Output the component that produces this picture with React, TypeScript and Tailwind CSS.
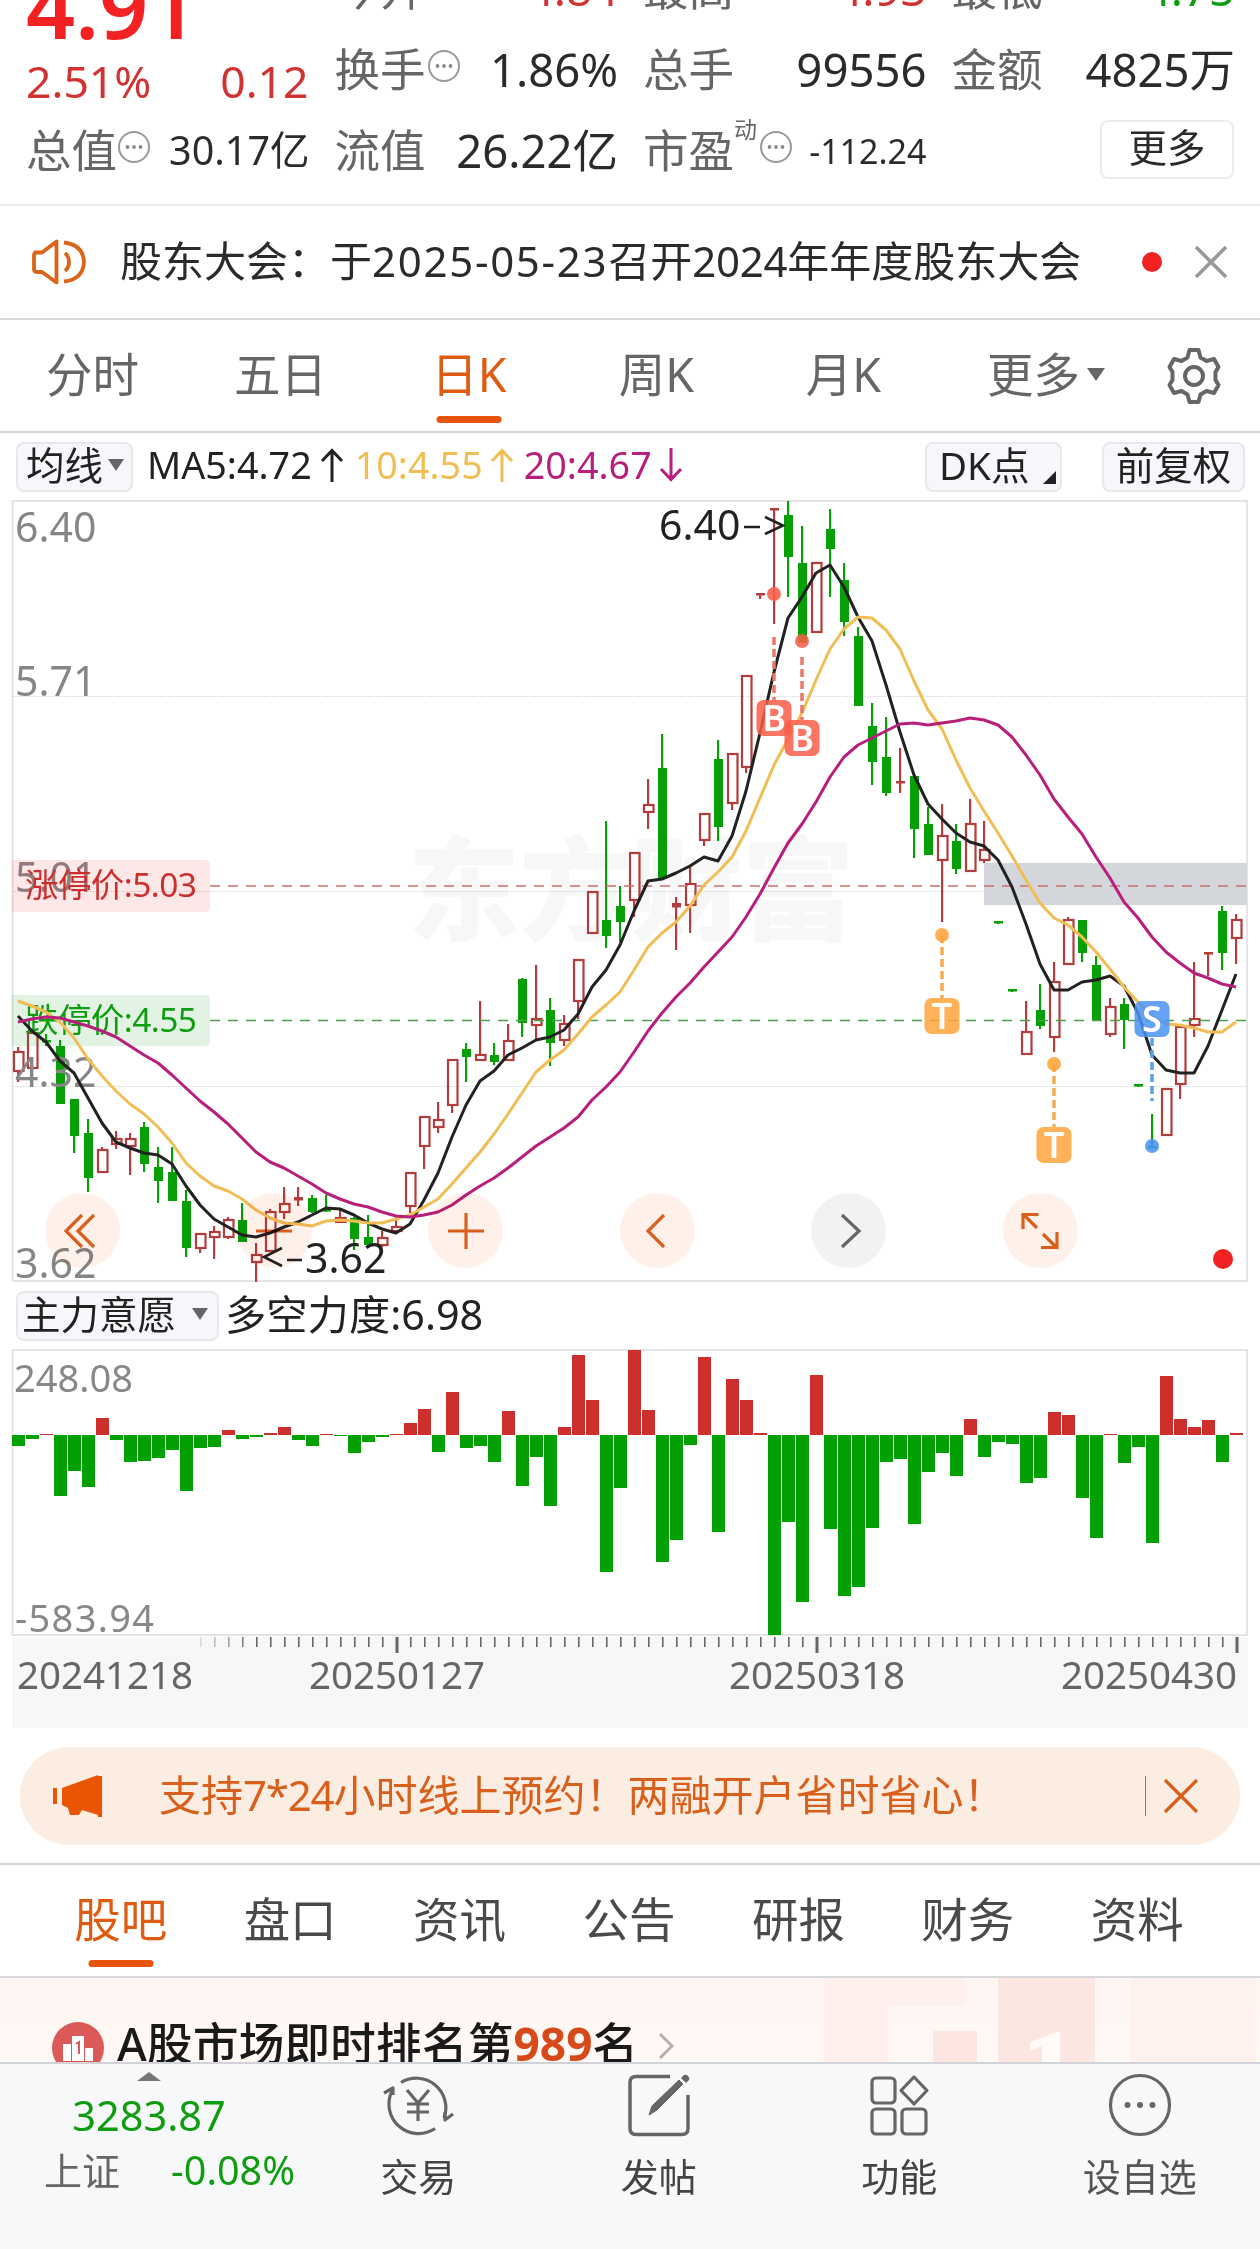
import type { ReactNode } from "react";

type Candle = [up: number, high: number, top: number, bottom: number, low: number];

const STEP = 14;
const X0 = 18;
const xAt = (i: number) => X0 + i * STEP;

// 1 = up (hollow red), 0 = down (solid green); y values are chart pixels
const CANDLES: Candle[] = [
  [1, 1047, 1051, 1072, 1082], [1, 1032, 1032, 1069, 1069], [0, 1034, 1041, 1043, 1046],
  [0, 1040, 1046, 1104, 1104], [0, 1099, 1099, 1136, 1153], [0, 1119, 1133, 1178, 1192],
  [1, 1147, 1149, 1173, 1173], [1, 1131, 1138, 1145, 1149], [1, 1133, 1138, 1147, 1175],
  [0, 1122, 1127, 1164, 1172], [0, 1147, 1167, 1181, 1203], [0, 1147, 1172, 1201, 1201],
  [0, 1190, 1201, 1248, 1257], [1, 1233, 1233, 1249, 1253], [1, 1226, 1231, 1238, 1259],
  [1, 1217, 1219, 1238, 1239], [0, 1203, 1220, 1242, 1242], [1, 1243, 1254, 1263, 1282],
  [1, 1209, 1211, 1252, 1252], [1, 1187, 1203, 1213, 1219], [1, 1187, 1198, 1201, 1206],
  [0, 1195, 1198, 1212, 1213], [0, 1195, 1209, 1212, 1212], [1, 1210, 1217, 1223, 1223],
  [0, 1217, 1218, 1239, 1250], [0, 1215, 1237, 1245, 1245], [1, 1231, 1237, 1246, 1247],
  [1, 1217, 1226, 1232, 1232], [1, 1172, 1172, 1207, 1213], [1, 1116, 1116, 1147, 1169],
  [1, 1102, 1119, 1128, 1133], [1, 1059, 1059, 1106, 1113], [0, 1043, 1049, 1057, 1082],
  [1, 1001, 1054, 1061, 1061], [0, 1043, 1055, 1062, 1065], [1, 1024, 1040, 1061, 1061],
  [0, 978, 979, 1023, 1037], [1, 965, 1018, 1026, 1040], [0, 998, 1010, 1043, 1066],
  [1, 1015, 1023, 1041, 1046], [1, 959, 959, 1002, 1019], [1, 891, 891, 934, 934],
  [0, 821, 920, 936, 948], [0, 886, 906, 922, 942], [1, 852, 852, 901, 917],
  [1, 779, 804, 813, 829], [0, 734, 768, 879, 879], [1, 897, 904, 908, 950],
  [1, 865, 883, 906, 933], [1, 813, 813, 841, 846], [0, 740, 759, 827, 841],
  [1, 753, 753, 804, 810], [1, 675, 675, 768, 773], [1, 594, 594, 594, 599],
  [1, 509, 509, 509, 624], [0, 501, 515, 557, 597], [0, 526, 563, 643, 643],
  [1, 562, 562, 633, 633], [0, 509, 529, 549, 597], [0, 563, 580, 622, 636],
  [0, 627, 636, 706, 706], [0, 703, 726, 762, 785], [0, 717, 757, 793, 796],
  [1, 748, 782, 782, 793], [0, 776, 776, 829, 858], [0, 807, 824, 855, 855],
  [1, 804, 835, 861, 922], [0, 824, 841, 869, 874], [1, 799, 823, 872, 872],
  [1, 821, 849, 861, 863], [0, 922, 922, 922, 922], [0, 990, 990, 990, 990],
  [1, 1001, 1031, 1055, 1055], [0, 984, 1010, 1026, 1029], [1, 962, 981, 1038, 1052],
  [1, 917, 919, 965, 965], [0, 920, 920, 953, 962], [0, 956, 965, 1021, 1021],
  [1, 998, 1006, 1035, 1037], [0, 998, 1004, 1020, 1049], [0, 1085, 1085, 1085, 1085],
  [0, 1114, 1147, 1147, 1147], [1, 1088, 1088, 1136, 1136], [1, 1026, 1026, 1085, 1099],
  [1, 962, 1018, 1026, 1037], [1, 953, 953, 953, 976], [0, 906, 911, 953, 970],
  [1, 914, 919, 939, 964],
];

const MA5 = [
  1016, 1031, 1042, 1061, 1073, 1098, 1123, 1142, 1148, 1153, 1155, 1164, 1186, 1205, 1219, 1227,
  1235, 1237, 1233, 1227, 1222, 1215, 1208, 1209, 1215, 1223, 1229, 1233, 1224, 1200, 1173, 1137,
  1105, 1081, 1071, 1055, 1048, 1040, 1037, 1030, 1014, 987, 970, 945, 911, 881, 879, 873, 866, 857,
  861, 836, 791, 733, 672, 618, 597, 573, 565, 587, 617, 641, 685, 732, 775, 804, 819, 833, 842, 846,
  860, 887, 924, 964, 990, 990, 982, 980, 976, 986, 1013, 1055, 1070, 1073, 1073, 1046, 1010, 974,
];

const MA10 = [
  1001, 1006, 1012, 1022, 1038, 1059, 1076, 1091, 1104, 1114, 1127, 1143, 1163, 1176, 1186, 1191,
  1199, 1210, 1218, 1223, 1224, 1226, 1221, 1220, 1221, 1223, 1223, 1219, 1215, 1207, 1199, 1184,
  1168, 1152, 1134, 1114, 1093, 1072, 1060, 1050, 1034, 1017, 1005, 992, 970, 947, 933, 922, 906, 885,
  872, 857, 831, 798, 765, 739, 713, 680, 649, 629, 617, 618, 630, 649, 681, 710, 729, 760, 788, 811,
  833, 856, 880, 903, 918, 925, 937, 952, 969, 987, 1002, 1016, 1024, 1025, 1028, 1032, 1032, 1022,
];

const MA20 = [
  1022, 1019, 1017, 1018, 1022, 1026, 1031, 1037, 1046, 1055, 1063, 1075, 1088, 1101, 1112, 1124,
  1138, 1152, 1162, 1168, 1176, 1184, 1193, 1199, 1204, 1207, 1212, 1216, 1217, 1215, 1212, 1205,
  1195, 1186, 1178, 1168, 1157, 1146, 1137, 1128, 1117, 1100, 1087, 1072, 1052, 1031, 1013, 997, 983,
  967, 952, 937, 917, 894, 868, 843, 824, 802, 777, 757, 745, 738, 731, 724, 723, 725, 723, 721, 718,
  720, 725, 737, 755, 775, 799, 817, 834, 857, 878, 902, 918, 937, 952, 963, 973, 978, 984, 987,
];

// positive = above the zero line
const FORCE = [
  -11, -4, 1, -61, -36, -52, 17, -5, -27, -26, -23, -15, -56, -13, -12, 5, -4, -2, 2, 8, -5, -11, 1,
  -1, -18, -7, -2, 1, 12, 26, -17, 43, -13, -11, -27, 24, -51, -22, -71, 8, 80, 35, -137, -53, 85, 25,
  -127, -105, -10, 78, -97, 56, 35, 2, -200, -87, -167, 60, -94, -161, -152, -93, -27, -24, -89, -37,
  -18, -41, 16, -22, -7, -9, -48, -43, 23, 20, -63, -103, 1, -28, -12, -108, 59, 16, 8, 15, -27, 2,
];

const RED = "#b33c3c";
const GREEN = "#06a006";

const points = (ys: number[]) => ys.map((y, i) => `${xAt(i)},${y}`).join(" ");

const CandleShape = ({ c, x }: { c: Candle; x: number }) => {
  const [up, high, top, bottom, low] = c;
  const color = up ? RED : GREEN;
  if (bottom - top < 5) {
    const h = Math.max(2, bottom - top);
    return (
      <g fill={color}>
        <rect x={x - 1} y={high} width={2.2} height={Math.max(2, low - high)} />
        <rect x={x - 4} y={top - 1} width={9} height={h + 0.5} />
      </g>
    );
  }
  return (
    <g fill={color}>
      <rect x={x - 1} y={high} width={2.2} height={top - high} />
      <rect x={x - 1} y={bottom} width={2.2} height={low - bottom} />
      {up ? (
        <rect x={x - 4} y={top + 1} width={9.5} height={bottom - top - 2} fill="none" stroke={color} strokeWidth={2.2} />
      ) : (
        <rect x={x - 4} y={top} width={9} height={bottom - top} />
      )}
    </g>
  );
};

type MarkProps = { x: number; dotY: number; boxY: number; from: number; to: number; label: string; color: string; line: string };

const Mark = ({ x, dotY, boxY, from, to, label, color, line }: MarkProps) => (
  <g>
    <line x1={x} x2={x} y1={from} y2={to} stroke={line} strokeWidth={3.5} strokeDasharray="8 4" />
    <circle cx={x} cy={dotY} r={7} fill={color} fillOpacity={0.88} />
    <rect x={x - 17.5} y={boxY} width={35} height={36} rx={7} fill={color} fillOpacity={0.85} />
    <text x={x} y={boxY + 30.5} textAnchor="middle" fontSize={36} fontWeight={600} fill="#fff">
      {label}
    </text>
  </g>
);

const KChart = () => (
  <svg width={1260} height={782} viewBox="0 500 1260 782" className="block">
    <text x={408} y={932} fontSize={112} fontWeight={900} fill="#f7f7f8" textLength={446}>
      东方财富
    </text>
    <rect x={12.5} y={501} width={1234.5} height={780} fill="none" stroke="#e2e2e4" strokeWidth={1.8} />
    {[696.5, 891.5, 1086.5].map((y) => (
      <line key={y} x1={12} x2={1247} y1={y} y2={y} stroke="#d4d4d6" strokeDasharray="1.3 1.3" />
    ))}
    <rect x={984} y={863} width={263} height={42} fill="#d3d7dc" />

    {CANDLES.map((c, i) => (
      <CandleShape key={i} c={c} x={xAt(i)} />
    ))}

    <g fontSize={41} fill="#868686">
      <text x={15} y={542}>6.40</text>
      <text x={15} y={696}>5.71</text>
      <text x={15} y={892}>5.01</text>
      <text x={15} y={1087}>4.32</text>
      <text x={15} y={1278}>3.62</text>
    </g>

    <line x1={210} x2={1247} y1={886} y2={886} stroke="#cc6f6f" strokeWidth={1.6} strokeDasharray="10 8" />
    <line x1={210} x2={1247} y1={1020.5} y2={1020.5} stroke="#4d9f4d" strokeWidth={1.4} strokeDasharray="10 8" />
    <path d="M12 860H205q5 0 5 5v42q0 5-5 5H12z" fill="#f02020" fillOpacity={0.11} />
    <path d="M12 995H205q5 0 5 5v41q0 5-5 5H12z" fill="#10a020" fillOpacity={0.12} />
    <text x={25} y={897} fontSize={33.5} fill="#cc2e2e" textLength={172}>
      涨停价:5.03
    </text>
    <text x={25} y={1032} fontSize={33.5} fill="#109c10" textLength={172}>
      跌停价:4.55
    </text>

    <g fill="none" strokeWidth={3} strokeLinejoin="round">
      <polyline points={points(MA5)} stroke="#222" />
      <polyline points={points(MA10)} stroke="#f0be55" />
      <polyline points={points(MA20)} stroke="#b81f7c" />
    </g>

    <g fontSize={41} fill="#222">
      <text x={659} y={540}>6.40</text>
      <path d="M744 527h16M765 517l18 8.500-18 8.500" fill="none" stroke="#222" strokeWidth={2.6} />
      <path d="M282 1248l-18 9 18 9M287 1260h15" fill="none" stroke="#222" strokeWidth={2.6} />
      <text x={305} y={1273}>3.62</text>
    </g>

    <Mark x={774} dotY={594} boxY={700} from={637} to={700} label="B" color="#fa5d4a" line="#ea7868" />
    <Mark x={802} dotY={641} boxY={720} from={657} to={720} label="B" color="#fa5d4a" line="#ea7868" />
    <Mark x={942} dotY={935} boxY={998} from={935} to={998} label="T" color="#ffa53a" line="#f2ab52" />
    <Mark x={1054} dotY={1064} boxY={1127} from={1064} to={1127} label="T" color="#ffa53a" line="#f2ab52" />
    <Mark x={1152} dotY={1146} boxY={1001} from={1038} to={1101} label="S" color="#4a93f5" line="#5f9fe8" />
    <circle cx={1223} cy={1259} r={10} fill="#f22222" />
  </svg>
);

const ForceChart = () => (
  <svg width={1260} height={380} viewBox="0 1349 1260 380" className="block">
    <rect x={12} y={1637} width={1236} height={91} fill="#f7f7fa" />
    <rect x={12.5} y={1350} width={1234.5} height={285} fill="none" stroke="#e2e2e4" strokeWidth={1.8} />
    {FORCE.map((v, i) => (
      <rect
        key={i}
        x={xAt(i) - 6}
        y={v > 0 ? 1435 - v : 1435}
        width={13}
        height={Math.abs(v)}
        fill={v > 0 ? "#cd2f2d" : "#02a002"}
      />
    ))}
    {FORCE.map((_, i) => {
      if (i < 13) return null;
      const major = i % 30 === 27;
      return (
        <rect
          key={i}
          x={xAt(i) + (major ? -0.5 : 0)}
          y={1637}
          width={major ? 3 : 1.6}
          height={major ? 16 : 10}
          fill="#666"
          opacity={Math.min(1, (i - 12) * 0.2)}
        />
      );
    })}
    <g fontSize={38} fill="#888">
      <text x={14} y={1392}>248.08</text>
      <text x={15} y={1632} textLength={139}>-583.94</text>
    </g>
    <g fontSize={38.5} fill="#666">
      <text x={17} y={1689} textLength={176}>20241218</text>
      <text x={309} y={1689} textLength={176}>20250127</text>
      <text x={729} y={1689} textLength={176}>20250318</text>
      <text x={1061} y={1689} textLength={176}>20250430</text>
    </g>
  </svg>
);

const Info = () => (
  <svg width={34} height={34} viewBox="0 0 34 34" fill="none" className="shrink-0">
    <circle cx={17} cy={17} r={15} stroke="#999" strokeWidth={2} />
    <g fill="#8a8a8a">
      <circle cx={10.5} cy={17} r={1.9} />
      <circle cx={17} cy={17} r={1.9} />
      <circle cx={23.5} cy={17} r={1.9} />
    </g>
  </svg>
);

const Stat = ({ label, value, info, tone = "text-[#2b2b2b]" }: { label: string; value: string; info?: boolean; tone?: string }) => (
  <div className="-mr-[2px] -ml-px flex h-[81px] items-center justify-between">
    <div className="flex items-center text-[#666]">
      {label}
      {info && <div className="-mt-2 ml-px"><Info /></div>}
    </div>
    <div className={tone}>{value}</div>
  </div>
);

const Quote = () => (
  <header className="h-[206px] overflow-hidden border-b-2 border-[#ebebeb]">
    <div className="-mt-[52px] grid grid-cols-4 gap-x-7 px-[27px] text-[45.5px] leading-none">
      <div>
        <div className="-ml-px flex h-[98px] items-end text-[86px] font-semibold leading-[80px] text-[#f22222]">4.91</div>
        <div className="-mx-px flex h-[64px] items-center justify-between pt-[6px] text-[44.5px] text-[#d13232]">
          <span>2.51%</span>
          <span>0.12</span>
        </div>
        <div className="-mr-[2px] -ml-px flex h-[81px] items-center justify-between">
          <div className="flex items-center text-[#666]">
            总值<div className="-mt-2"><Info /></div>
          </div>
          <div className="text-[39.5px] text-[#2b2b2b]">30.17亿</div>
        </div>
      </div>
      <div>
        <Stat label="今开" value="4.84" tone="text-[#d13232]" />
        <Stat label="换手" value="1.86%" info />
        <Stat label="流值" value="26.22亿" />
      </div>
      <div>
        <Stat label="最高" value="4.93" tone="text-[#d13232]" />
        <Stat label="总手" value="99556" />
        <div className="-mr-[2px] -ml-px flex h-[81px] items-center justify-between">
          <div className="flex items-center text-[#666]">
            市盈
            <span className="-mt-[42px] text-[23px]">动</span>
            <div className="-mt-2 ml-[2px]"><Info /></div>
          </div>
          <div className="text-[34px] text-[#2b2b2b]">-112.24</div>
        </div>
      </div>
      <div>
        <Stat label="最低" value="4.75" tone="text-[#109c10]" />
        <Stat label="金额" value="4825万" />
        <div className="-mr-px flex h-[81px] items-center justify-end pb-[2px]">
          <div className="flex h-[59px] w-[134px] items-center justify-center rounded-lg border-2 border-[#ececec] pb-1 text-[38.5px] text-[#2b2b2b]">
            更多
          </div>
        </div>
      </div>
    </div>
  </header>
);

const Notice = () => (
  <div className="flex h-[114px] items-center border-b-2 border-[#d8d8da] pl-[30px] pr-8">
    <svg width={60} height={52} viewBox="0 0 60 52" fill="none" stroke="#dc6418" strokeWidth={3.8} strokeLinejoin="round">
      <path d="M4 16.500h8L26.500 5.500v41L12 36H7q-3 0-3-3V19.500q0-3 3-3" />
      <path d="M35 17q4 3.500 4 9t-4 9M34 6.500q19 2 20 19.500-1 17.500-20 19.500" />
    </svg>
    <div className="ml-[30px] whitespace-nowrap pb-[3px] text-[42px] leading-none text-[#2b2b2b]">
      股东大会：于<span className="tracking-[1.7px]">2025-05-23</span>召开
      <span className="tracking-[-0.3px]">2024</span>年年度股东大会
    </div>
    <div className="ml-auto size-5 rounded-full bg-[#f22222]" />
    <svg width={34} height={34} viewBox="0 0 34 34" fill="none" stroke="#999" strokeWidth={3.6} className="ml-8">
      <path d="M2 2l30 30M32 2L2 32" />
    </svg>
  </div>
);

const Down = ({ size = "border-x-[8px] border-t-[12px]" }: { size?: string }) => (
  <span className={`${size} size-0 border-x-transparent border-t-[#666]`} />
);

const Periods = () => (
  <nav className="flex h-[113px] items-center border-b-2 border-[#d8d8da] text-[46.5px] leading-none text-[#666]">
    <div className="w-[187px] pb-[2px] pr-[2px] text-center">分时</div>
    <div className="w-[187px] pb-[2px] text-center">五日</div>
    <div className="relative w-[190px] pb-[2px] text-center text-[#dd5c12]">
      日K
      <div className="absolute -bottom-[23px] left-1/2 h-[7px] w-[65px] -translate-x-1/2 rounded-full bg-[#e65509]" />
    </div>
    <div className="w-[187px] pb-[2px] pr-[2px] text-center">周K</div>
    <div className="w-[187px] pb-[2px] pr-[2px] text-center">月K</div>
    <div className="flex w-[219px] items-center justify-center gap-[7px] pb-[2px] pr-[3px]">
      更多
      <Down size="border-x-[9px] border-t-[13px]" />
    </div>
    <div className="flex w-[74px] justify-center">
      <svg width={60} height={60} viewBox="0 0 60 60" fill="none" stroke="#666" strokeWidth={4} strokeLinejoin="round" className="shrink-0">
        <path d="M25.500 4h9l2 7.500 6 3.500 7.500-2 4.500 8-3 5v8l3 5-4.500 8-7.500-2-6 3.500-2 7.500h-9l-2-7.500-6-3.500-7.500 2-4.500-8 3-5v-8l-3-5 4.500-8 7.500 2 6-3.500z" />
        <circle cx={30} cy={30} r={9} />
      </svg>
    </div>
  </nav>
);

const Chip = ({ className, children }: { className: string; children: ReactNode }) => (
  <div className={`${className} flex h-[50px] items-center rounded-lg border-2 border-[#e6e8ec] bg-[#f5f7fa] pb-[3px] text-[38.5px] leading-none text-[#222]`}>
    {children}
  </div>
);

const Arrow = ({ down }: { down?: boolean }) => (
  <svg width={24} height={34} viewBox="0 0 24 34" fill="none" stroke="currentColor" strokeWidth={3} className={down ? "rotate-180" : ""}>
    <path d="M12 34V3M2 13L12 2.500 22 13" />
  </svg>
);

const MaRow = () => (
  <div className="flex h-[67px] items-center pl-4 pr-[15px] text-[37.7px] leading-none">
    <Chip className="w-[117px] justify-between pl-2 pr-[7px]">
      均线
      <Down />
    </Chip>
    <div className="ml-[14px] flex items-center gap-[8px] pb-[3px] text-[#222]">
      MA5:4.72
      <Arrow />
    </div>
    <div className="ml-[11px] flex items-center gap-[7px] pb-[3px] text-[#f0be55]">
      10:4.55
      <Arrow />
    </div>
    <div className="ml-[10px] flex items-center gap-[7px] pb-[3px] text-[#b81f7c]">
      20:4.67
      <Arrow down />
    </div>
    <Chip className="ml-auto w-[137px] justify-between pl-3 pr-1">
      DK点
      <svg width={13} height={13} className="mt-6">
        <path d="M13 0v13H0z" fill="#222" />
      </svg>
    </Chip>
    <Chip className="ml-10 w-[143px] justify-center">前复权</Chip>
  </div>
);

const ChartButton = ({ d, gray }: { d: string; gray?: boolean }) => (
  <div className={`${gray ? "bg-[#f2f2f2] text-[#666]" : "bg-[#fff0ea] text-[#d9601c]"} flex size-[75px] items-center justify-center rounded-full mix-blend-multiply`}>
    <svg width={40} height={40} viewBox="0 0 40 40" fill="none" stroke="currentColor" strokeWidth={3.2}>
      <path d={d} />
    </svg>
  </div>
);

const ChartButtons = () => (
  <div className="absolute left-[45px] top-[693px] flex gap-[116.5px]">
    <ChartButton d="M19 4L3 20l16 16M31 4L15 20l16 16" />
    <ChartButton d="M2 20h36" />
    <ChartButton d="M2 20h36M20 2v36" />
    <ChartButton d="M27 4L11 20l16 16" />
    <ChartButton d="M13 4l17 16-17 16" gray />
    <ChartButton d="M3 18V3.500h15.500M4 4l13 13M37 21v15.500H21M36 36L23 23" />
  </div>
);

const Promo = () => (
  <div className="mx-5 mt-[18px] flex h-[98px] items-center rounded-full bg-[#fcede3] pl-8 pr-[41px] text-[#d9601c]">
    <svg width={50} height={42} viewBox="0 0 50 42" fill="#ea5504">
      <path d="M1 13h4v16H1zM10 13L46 0v1h4v41h-4v-2l-16-5-3 5h-9l-2-7-6-3z" />
    </svg>
    <div className="ml-[57px] whitespace-nowrap pb-[2px] text-[42px] leading-none">
      支持<span className="tracking-[-1.2px]">7*24</span>小时线上预约！两融开户省时省心！
    </div>
    <div className="ml-auto h-10 w-px bg-[#d9601c]" />
    <svg width={36} height={36} viewBox="0 0 36 36" fill="none" stroke="currentColor" strokeWidth={3.2} className="ml-[17px]">
      <path d="M2 2l32 32M34 2L2 34" />
    </svg>
  </div>
);

const SECTIONS = ["盘口", "资讯", "公告", "研报", "财务", "资料"];

const Sections = () => (
  <nav className="mt-[18px] flex h-[115px] items-center border-y-2 border-[#d8d8da] pl-9 pr-[38px] text-[46.5px] leading-none text-[#4a4a4a]">
    <div className="relative flex-1 pb-[2px] text-center text-[#dd5c12]">
      股吧
      <div className="absolute -bottom-[22px] left-1/2 h-[7px] w-[65px] -translate-x-1/2 rounded-full bg-[#e65509]" />
    </div>
    {SECTIONS.map((s) => (
      <div key={s} className="flex-1 pb-[2px] text-center">{s}</div>
    ))}
  </nav>
);

const Rank = () => (
  <div className="relative h-[84px] overflow-hidden bg-gradient-to-b from-[#fff5f2] to-[#fff9f6]">
    <svg width={440} height={84} viewBox="820 1978 440 84" className="absolute right-0 top-0">
      <path d="M824 1978h141v28h-77v56h-64z" fill="#fff0ec" />
      <path d="M933 2031h44v31h-44z" fill="#fde6e2" />
      <path d="M998 1978h97v84h-97z" fill="#fce6e2" />
      <path d="M1130 1978h126v84h-126z" fill="#fff1ed" />
      <path d="M1030 2042l30-11v31h-18v-16l-12 5z" fill="#fffaf8" />
    </svg>
    <div className="relative flex h-[90px] items-center pl-[52px] pt-[41px] text-[45.5px] font-medium leading-none text-[#1a1a1a]">
      <svg width={52} height={52} viewBox="0 0 52 52" className="mt-[8px] shrink-0">
        <circle cx={26} cy={26} r={26} fill="#db5a58" />
        <path d="M11 22h8v17h-8zM33 26h8v13h-8zM20 14h12v25H20z" fill="#fff" />
        <path d="M24 22l3-2v12" fill="none" stroke="#db5a58" strokeWidth={2} />
      </svg>
      <div className="ml-[13px] whitespace-nowrap">
        <span className="tracking-[0.3px]">A股市场即时排名第</span>
        <span className="text-[46px] font-bold text-[#d8491a]">989</span>名
      </div>
      <svg width={16} height={26} viewBox="0 0 16 26" fill="none" stroke="#b5b0ae" strokeWidth={3} className="ml-5 mt-1">
        <path d="M2 1l12 12L2 25" />
      </svg>
    </div>
  </div>
);

const NavItem = ({ label, tone = "text-[#444]", children }: { label: string; tone?: string; children: ReactNode }) => (
  <div className="flex flex-1 flex-col items-center pt-[7px]">
    <svg width={72} height={68} viewBox="0 0 72 68" fill="none" stroke="#666" strokeWidth={3.2} strokeLinejoin="round">
      {children}
    </svg>
    <div className={`${tone} mt-[18px] text-[38px] leading-none`}>{label}</div>
  </div>
);

const BottomBar = () => (
  <footer className="flex h-[188px] border-t-2 border-[#d2d3d8] bg-[#f7f8fa]">
    <div className="flex w-[298px] flex-col items-center pt-2">
      <span className="size-0 border-x-[12px] border-b-[9px] border-x-transparent border-b-[#777]" />
      <div className="mt-[14px] text-[41.5px] leading-none text-[#109c10]">3283.87</div>
      <div className="mt-[14px] flex w-full justify-between pl-11 text-[38px] leading-none">
        <span className="text-[#666]">上证</span>
        <span className="pr-[3px] text-[39.5px] text-[#109c10]">-0.08%</span>
      </div>
    </div>
    <NavItem label="交易">
      <path d="M19 11.500A29.500 29.500 0 0 1 62 47M53 57.500A29.500 29.500 0 0 1 10 20" />
      <path d="M2 22l9-5v7M71 43l-8 6v-8" />
      <path d="M25 19l11 13 11-13M36 32v18M25 33h22M25 41h22" />
    </NavItem>
    <NavItem label="发帖">
      <path d="M47 5.500H13q-6 0-6 6v46q0 6 6 6h46q6 0 6-6V24" strokeWidth={3.5} />
      <path d="M26 44l3-9L56 9l4 4L34 39z" fill="#666" strokeWidth={1} />
      <path d="M58 7l3-3q2-1 4 1t1 4l-3 3z" fill="#666" stroke="none" />
    </NavItem>
    <NavItem label="功能">
      <rect x={9} y={7} width={23} height={25} rx={4} />
      <rect x={9} y={38} width={23} height={25} rx={4} />
      <rect x={39} y={38} width={24} height={25} rx={4} />
      <path d="M51 6l13 13.500L51 33 38 19.500z" />
    </NavItem>
    <NavItem label="设自选" tone="text-[#555]">
      <circle cx={36} cy={34} r={29.5} />
      <g fill="#666" stroke="none">
        <circle cx={23.5} cy={34} r={3} />
        <circle cx={36} cy={34} r={3} />
        <circle cx={48.5} cy={34} r={3} />
      </g>
    </NavItem>
  </footer>
);

export default function App() {
  return (
    <div className="flex h-[2249px] w-[1260px] flex-col overflow-hidden bg-white font-['Noto_Sans','Noto_Sans_CJK_SC',sans-serif] *:shrink-0">
      <Quote />
      <Notice />
      <Periods />
      <MaRow />
      <div className="relative">
        <KChart />
        <ChartButtons />
      </div>
      <div className="flex h-[67px] items-center pl-4 text-[#222]">
        <Chip className="w-[203px] justify-between pl-1 pr-[9px]">
          主力意愿
          <Down />
        </Chip>
        <div className="ml-[6px] pb-[2px] text-[41.3px] leading-none">多空力度:6.98</div>
      </div>
      <ForceChart />
      <Promo />
      <Sections />
      <Rank />
      <BottomBar />
    </div>
  );
}
